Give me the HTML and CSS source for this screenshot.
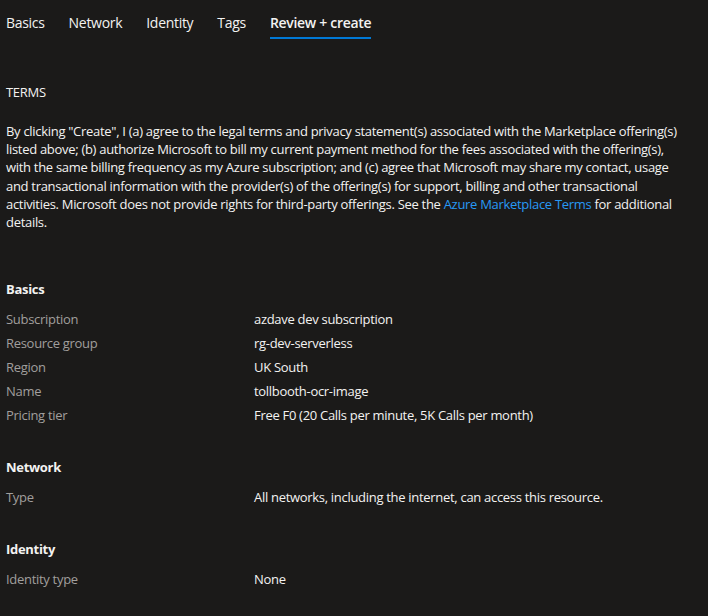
FILE: index.html
```html
<!DOCTYPE html>
<html>
<head>
<meta charset="utf-8">
<link rel="stylesheet" href="styles.css">
</head>
<body>
<nav class="tabs">
  <span class="tab">Basics</span>
  <span class="tab">Network</span>
  <span class="tab">Identity</span>
  <span class="tab">Tags</span>
  <span class="tab active">Review + create</span>
</nav>
<main class="content">
  <h2 class="terms-title">TERMS</h2>
  <p class="terms">By clicking "Create", I (a) agree to the legal terms and privacy statement(s) associated with the Marketplace offering(s) listed above; (b) authorize Microsoft to bill my current payment method for the fees associated with the offering(s), with the same billing frequency as my Azure subscription; and (c) agree that Microsoft may share my contact, usage and transactional information with the provider(s) of the offering(s) for support, billing and other transactional activities. Microsoft does not provide rights for third-party offerings. See the <a class="link" href="#">Azure Marketplace Terms</a> for additional details.</p>

  <section class="group">
    <h3 class="group-title">Basics</h3>
    <div class="row"><span class="label">Subscription</span><span class="value">azdave dev subscription</span></div>
    <div class="row"><span class="label">Resource group</span><span class="value">rg-dev-serverless</span></div>
    <div class="row"><span class="label">Region</span><span class="value">UK South</span></div>
    <div class="row"><span class="label">Name</span><span class="value">tollbooth-ocr-image</span></div>
    <div class="row"><span class="label">Pricing tier</span><span class="value">Free F0 (20 Calls per minute, 5K Calls per month)</span></div>
  </section>

  <section class="group">
    <h3 class="group-title">Network</h3>
    <div class="row"><span class="label">Type</span><span class="value">All networks, including the internet, can access this resource.</span></div>
  </section>

  <section class="group">
    <h3 class="group-title">Identity</h3>
    <div class="row"><span class="label">Identity type</span><span class="value">None</span></div>
  </section>
</main>
</body>
</html>
```
FILE: styles.css
```css
html, body {
  margin: 0;
  padding: 0;
  background: #1b1a19;
  color: #f3f2f1;
  font-family: "Open Sans", "Noto Sans", sans-serif;
  font-size: 13px;
  letter-spacing: -0.3px;
}
body {
  padding: 0 6px;
  height: 616px;
  overflow: hidden;
}
.tabs {
  display: flex;
  gap: 24px;
}
.tab {
  font-size: 14px;
  line-height: 18px;
  padding: 14px 0 5px;
  border-bottom: 2px solid transparent;
  color: #f3f2f1;
}
.tab.active {
  font-weight: 600;
  border-bottom-color: #0078d4;
}
.content {
  padding-top: 44px;
}
.terms-title {
  margin: 0;
  font-size: 13px;
  font-weight: 400;
  line-height: 18px;
}
.terms {
  margin: 21px 0 0;
  line-height: 18.2px;
  width: 680px;
}
.link {
  color: #2899f5;
  text-decoration: none;
}
.group {
  margin-top: 49px;
}
.group + .group {
  margin-top: 31px;
}
.group-title {
  margin: 0 0 9px;
  font-size: 13px;
  font-weight: 700;
  line-height: 18px;
}
.row {
  display: grid;
  grid-template-columns: 248px 1fr;
  line-height: 24px;
}
.label {
  color: #a19f9d;
}
.value {
  color: #f3f2f1;
}
```
